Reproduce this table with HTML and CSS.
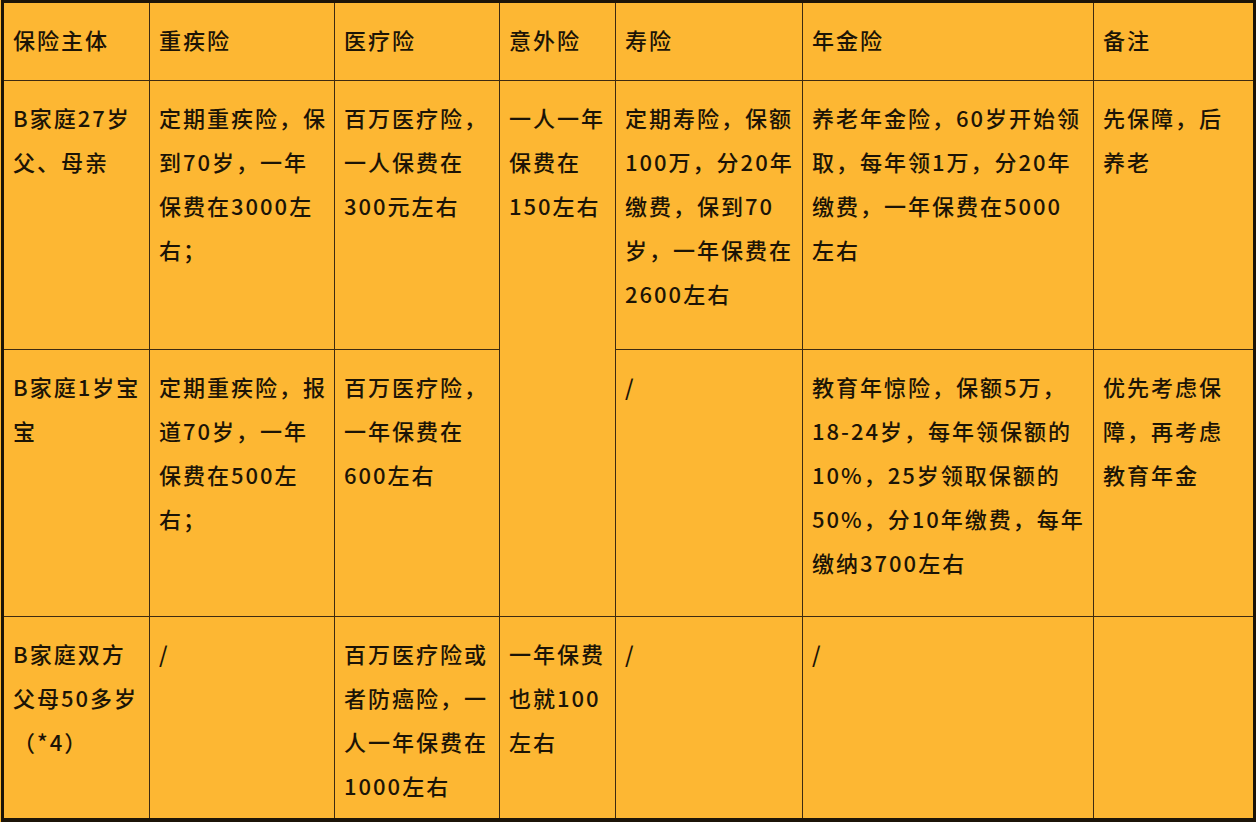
FILE: index.html
```html
<!DOCTYPE html>
<html lang="zh">
<head>
<meta charset="utf-8">
<title>保险配置表</title>
<link rel="stylesheet" href="styles.css">
</head>
<body>
<div class="page">
  <div class="table">
    <div class="cell">保险主体</div>
    <div class="cell">重疾险</div>
    <div class="cell">医疗险</div>
    <div class="cell">意外险</div>
    <div class="cell">寿险</div>
    <div class="cell">年金险</div>
    <div class="cell">备注</div>

    <div class="cell">B家庭27岁<br>父、母亲</div>
    <div class="cell">定期重疾险，保<br>到70岁，一年<br>保费在3000左<br>右；</div>
    <div class="cell">百万医疗险，<br>一人保费在<br>300元左右</div>
    <div class="cell span2">一人一年<br>保费在<br>150左右</div>
    <div class="cell">定期寿险，保额<br>100万，分20年<br>缴费，保到70<br>岁，一年保费在<br>2600左右</div>
    <div class="cell">养老年金险，60岁开始领<br>取，每年领1万，分20年<br>缴费，一年保费在5000<br>左右</div>
    <div class="cell">先保障，后<br>养老</div>

    <div class="cell">B家庭1岁宝<br>宝</div>
    <div class="cell">定期重疾险，报<br>道70岁，一年<br>保费在500左<br>右；</div>
    <div class="cell">百万医疗险，<br>一年保费在<br>600左右</div>
    <div class="cell">/</div>
    <div class="cell">教育年惊险，保额5万，<br>18-24岁，每年领保额的<br>10%，25岁领取保额的<br>50%，分10年缴费，每年<br>缴纳3700左右</div>
    <div class="cell">优先考虑保<br>障，再考虑<br>教育年金</div>

    <div class="cell">B家庭双方<br>父母50多岁<br>（*4）</div>
    <div class="cell">/</div>
    <div class="cell">百万医疗险或<br>者防癌险，一<br>人一年保费在<br>1000左右</div>
    <div class="cell">一年保费<br>也就100<br>左右</div>
    <div class="cell">/</div>
    <div class="cell">/</div>
    <div class="cell"></div>
  </div>
</div>
</body>
</html>
```
FILE: styles.css
```css
html, body {
  margin: 0;
  padding: 0;
  background: #fdb733;
}

.page {
  padding-left: 1px;
}

.table {
  display: grid;
  grid-template-columns: 145px 184px 164px 115px 186px 290px 159px;
  grid-template-rows: 77px 268px 266px 201px;
  gap: 1px;
  width: 1249px;
  border: 3px solid #1c1408;
  border-bottom-width: 4px;
  background: #3e2a10;
  font-family: "Noto Sans CJK SC", "Noto Sans", sans-serif;
  font-size: 22px;
  font-weight: 500;
  letter-spacing: 2px;
  line-height: 44px;
  color: #1c1406;
}

.cell {
  background: #fdb733;
  padding: 14px 0 0 9px;
  white-space: nowrap;
  overflow: hidden;
}

.span2 {
  grid-row: span 2;
}
```
